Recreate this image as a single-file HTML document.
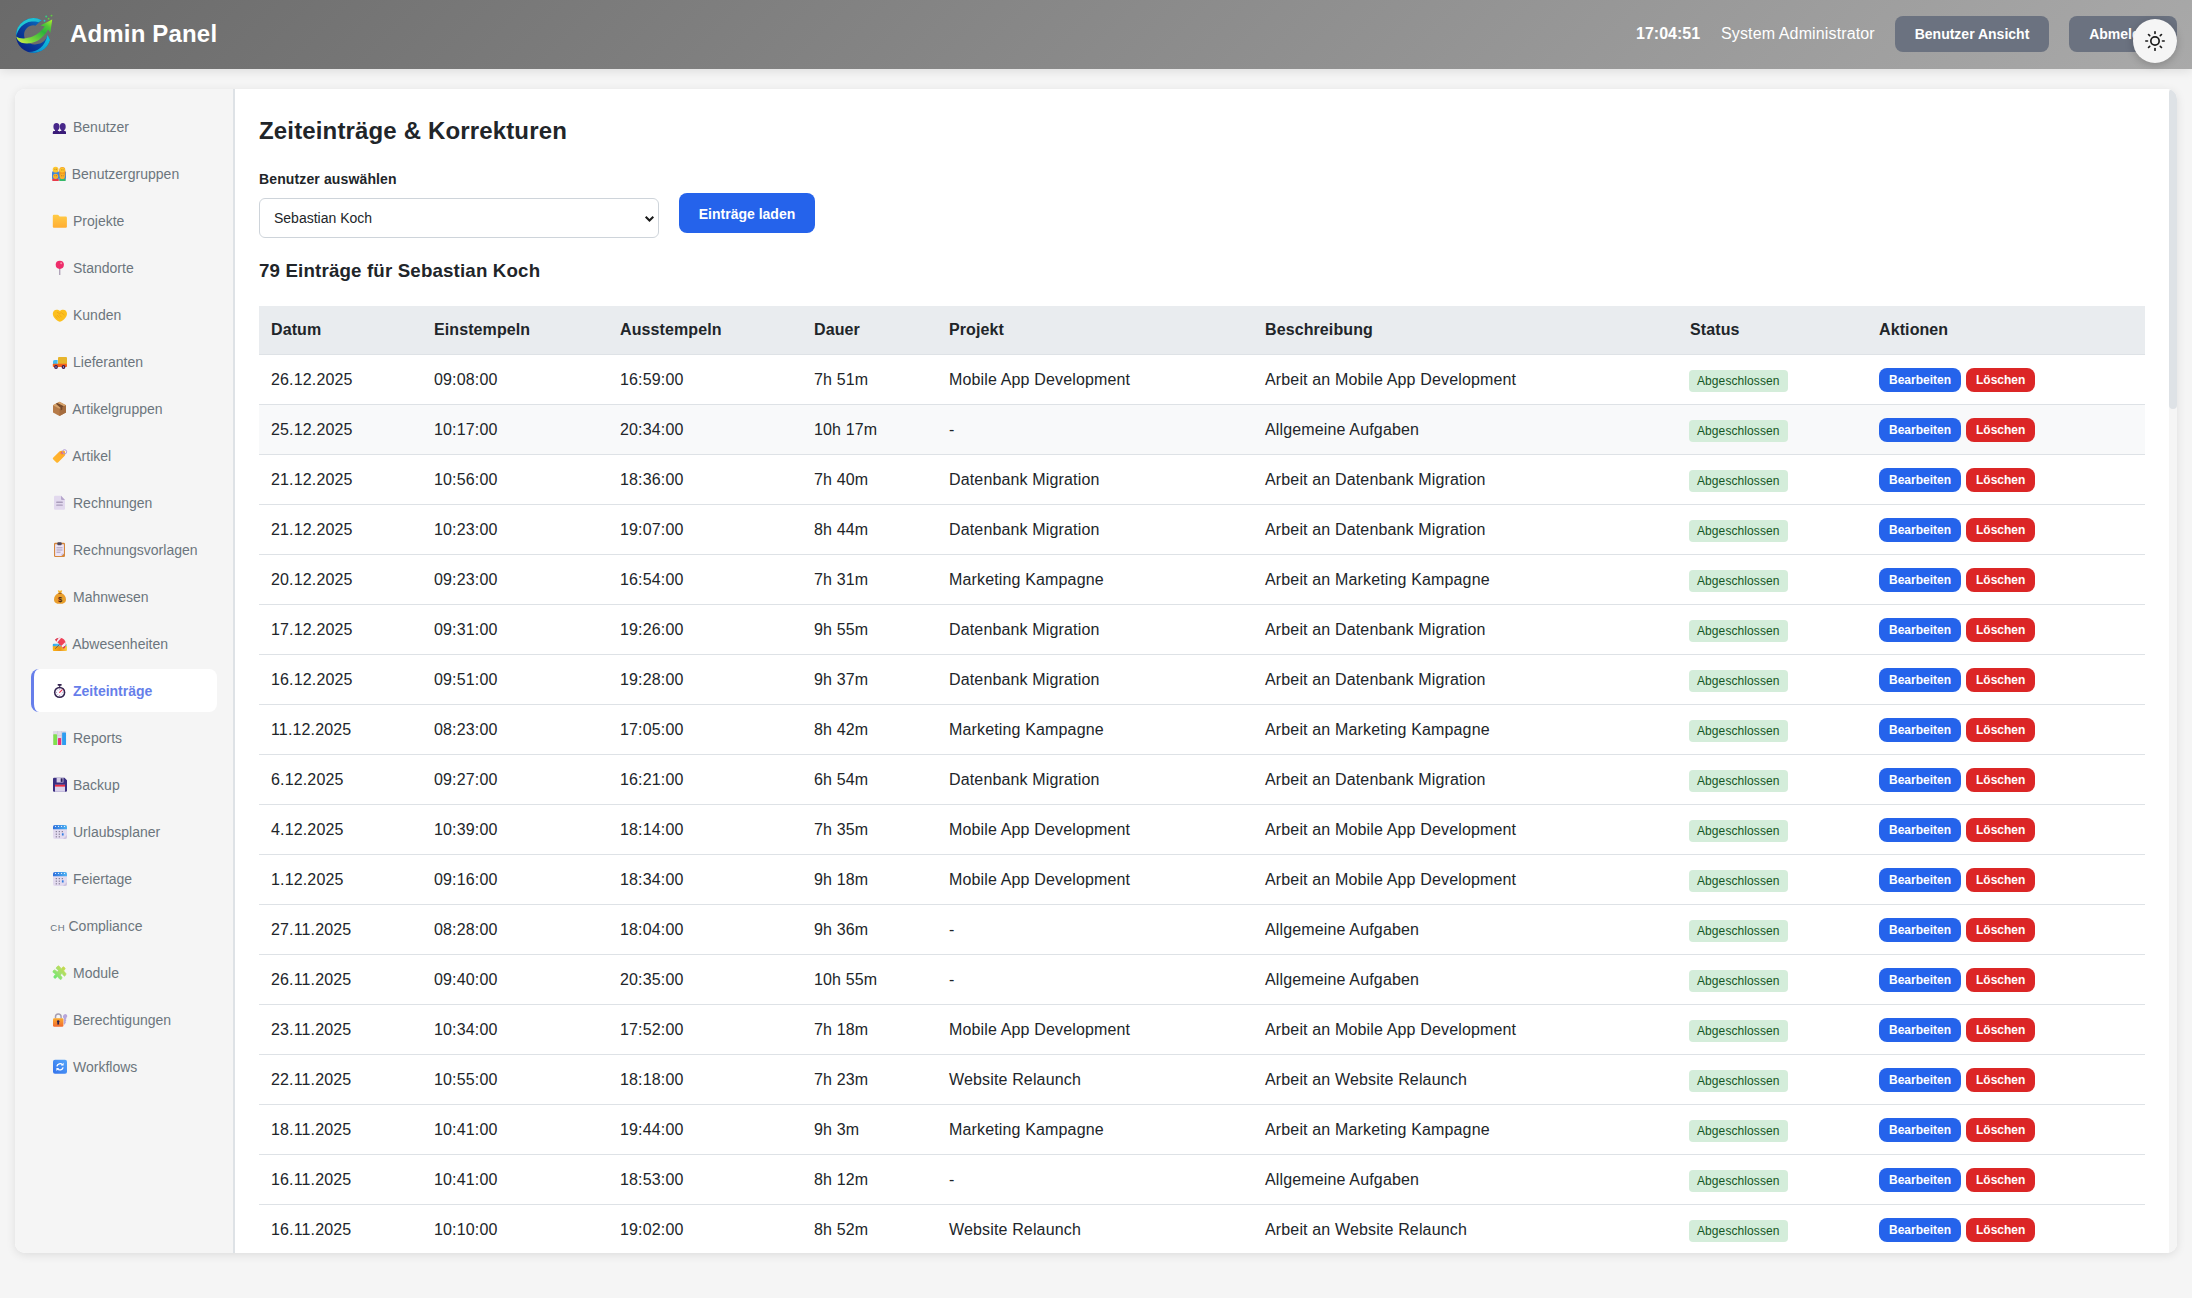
<!DOCTYPE html>
<html lang="de">
<head>
<meta charset="utf-8">
<title>Admin Panel</title>
<style>
*{box-sizing:border-box}
html,body{margin:0;padding:0}
body{width:2192px;height:1298px;overflow:hidden;background:#f5f5f5;font-family:"Liberation Sans",sans-serif;color:#212529;position:relative}
.hdr{position:absolute;left:0;top:0;width:2192px;height:69px;background:linear-gradient(135deg,#6a6a6a 0%,#a9a9a9 100%);box-shadow:0 2px 10px rgba(0,0,0,.1);z-index:2}
.logo{position:absolute;left:10px;top:8px;width:50px;height:50px}
.ttl{position:absolute;left:70px;top:20px;letter-spacing:.17px;font-size:24px;font-weight:bold;color:#fff;line-height:28px;white-space:nowrap}
.clk{position:absolute;left:1636px;top:25px;font-size:16px;font-weight:bold;color:#fff;line-height:18px;white-space:nowrap}
.usr{position:absolute;left:1721px;top:25px;letter-spacing:.13px;font-size:16px;color:#fff;line-height:18px;white-space:nowrap}
.hb{position:absolute;top:16px;height:36px;background:#6b7280;border-radius:8px;color:#fff;font-size:14px;font-weight:bold;line-height:36px;text-align:center;white-space:nowrap}
.tg{position:absolute;left:2133px;top:19px;width:44px;height:44px;border-radius:50%;background:#f5f5f5;box-shadow:0 2px 8px rgba(0,0,0,.2);z-index:3}
.tg svg{position:absolute;left:12px;top:12px;width:20px;height:20px}
.box{position:absolute;left:15px;top:89px;width:2162px;height:1164px;border-radius:10px;overflow:hidden;background:#fff;box-shadow:0 2px 10px rgba(0,0,0,.1)}
.side{position:absolute;left:0;top:0;width:220px;height:1164px;background:#f5f5f5;border-right:2px solid #dee2e6}
.ic{position:absolute;left:37px;width:16px;height:16px;display:block}
.ic svg{width:16px;height:16px;display:block}
.ch{position:absolute;left:35.300px;width:16px;height:16px;font-size:9.600px;line-height:16px;color:#6c757d;letter-spacing:.6px}
.nt{position:absolute;font-size:14px;line-height:20px;color:#6c757d;white-space:nowrap}
.nt.act{color:#667eea;font-weight:bold}
.actbg{position:absolute;left:16px;width:186px;height:43px;background:#fff;border-left:3px solid #667eea;border-radius:8px}
.main{position:absolute;left:220px;top:0;width:1934px;height:1164px;background:#fff}
.sb{position:absolute;left:2154px;top:0;width:8px;height:1164px;background:#f5f5f5}
.sb i{position:absolute;left:0;top:0;width:8px;height:320px;background:#dee2e6;border-radius:4px}
h2{position:absolute;left:24px;top:28px;margin:0;letter-spacing:.15px;font-size:24px;line-height:28px;font-weight:bold;color:#212529;white-space:nowrap}
.lbl{position:absolute;left:24px;top:82px;letter-spacing:.13px;font-size:14px;line-height:16px;font-weight:bold;white-space:nowrap}
.sel{position:absolute;left:24px;top:109px;width:400px;height:40px;border:1px solid #ced4da;border-radius:6px;background:#fff;font-size:14px;line-height:38px;padding-left:14px;color:#212529}
.sel svg{position:absolute;right:3.200px;top:13.500px;width:11px;height:11px}
.btn{position:absolute;left:444px;top:104px;width:136px;height:40px;border-radius:8px;background:#2563eb;color:#fff;font-size:14px;font-weight:bold;line-height:42px;text-align:center}
h3{position:absolute;left:24px;top:171px;margin:0;letter-spacing:.16px;font-size:18.72px;line-height:22px;font-weight:bold;white-space:nowrap}
table{position:absolute;left:24px;top:217px;width:1886px;border-collapse:collapse;table-layout:fixed;font-size:16px}
th{background:#e9ecef;text-align:left;font-weight:bold;height:48px;padding:0 12px;border-bottom:1px solid #dee2e6;line-height:18px;letter-spacing:.1px}
td{height:50px;padding:2px 12px 0;letter-spacing:.15px;border-bottom:1px solid #dee2e6;line-height:18px;white-space:nowrap;vertical-align:middle}
tr.hv td{background:#f8f9fa}
.bd{letter-spacing:.09px;display:inline-block;background:#d4edda;color:#155724;font-size:12px;line-height:22px;height:22px;padding:0 8px;border-radius:4px;position:relative;top:1px;left:-1px}
.b1,.b2{letter-spacing:0;display:inline-block;height:24px;line-height:24px;font-size:12px;font-weight:bold;color:#fff;padding:0 10px;border-radius:8px;vertical-align:middle;position:relative;top:0px}
.b1{background:#2563eb;margin-right:5px}
.b2{background:#dc2626}
</style>
</head>
<body>
<div class="hdr">
<svg class="logo" viewBox="0 0 50 50">
<defs>
<linearGradient id="lgA" x1="0" y1="0" x2="1" y2="1"><stop offset="0" stop-color="#2ad8d0"/><stop offset="1" stop-color="#0a9ad8"/></linearGradient>
<linearGradient id="lgA2" x1="0" y1="1" x2="1" y2="0"><stop offset="0" stop-color="#0b8ad0"/><stop offset="1" stop-color="#10c4dc"/></linearGradient>
<linearGradient id="lgB" x1="1" y1="0" x2="0" y2="1"><stop offset="0" stop-color="#0c8ad0"/><stop offset=".45" stop-color="#0a46a4"/><stop offset="1" stop-color="#081a7c"/></linearGradient>
<linearGradient id="lgC" x1="0" y1="1" x2="1" y2="0"><stop offset="0" stop-color="#e6f24c"/><stop offset=".28" stop-color="#7ad83c"/><stop offset=".62" stop-color="#2cb23a"/><stop offset=".8" stop-color="#52c838"/><stop offset="1" stop-color="#b8f62a"/></linearGradient>
</defs>
<path d="M31.600 12.300A17.300 17.300 0 1 0 40 32L37.600 27C36.500 31.500 33 36 25 36.400C18 36.600 14.100 32 14.100 26.800C14.100 21.500 18.500 17.300 23.600 17.300C24.300 17.300 24.900 17.500 25.400 17.700z" fill="url(#lgB)"/>
<path d="M31.600 12.300A17.300 17.300 0 0 0 6.200 29C7.500 21 13.500 14.600 21.500 13.600C24.500 13.300 27 13.500 28.600 14.300z" fill="url(#lgA)"/>
<path d="M40 32A17.300 17.300 0 0 1 18 44C26.500 44.500 34.500 39.500 37.600 27z" fill="url(#lgA2)"/>
<path d="M6.200 28.500C9 30.800 16 31.300 23.100 28.300C27.500 26.300 32 22.500 34.700 18.500L30.400 17.500L42.200 11.600L40.400 24.700L38.100 21.600C36.500 25 32 30.500 27 33.100C22 35.600 16 36 11.600 34.700C9 33.800 7 32 6.200 28.500z" fill="url(#lgC)"/>
<circle cx="36.200" cy="8.500" r="1" fill="#36cc84"/><circle cx="41.500" cy="7.600" r=".95" fill="#5ed23e"/><circle cx="38.600" cy="10.700" r=".9" fill="#5ed23e"/><circle cx="34.500" cy="12.700" r=".95" fill="#20c2ca"/>
</svg>
<div class="ttl">Admin Panel</div>
<div class="clk">17:04:51</div>
<div class="usr">System Administrator</div>
<div class="hb" style="left:1895px;width:154px">Benutzer Ansicht</div>
<div class="hb" style="left:2069px;width:108px">Abmelden</div>
</div>
<div class="tg"><svg viewBox="0 0 24 24" fill="none" stroke="#1a1a1a" stroke-width="2" stroke-linecap="round" stroke-linejoin="round"><circle cx="12" cy="12" r="5"/><line x1="12" y1="1" x2="12" y2="3"/><line x1="12" y1="21" x2="12" y2="23"/><line x1="4.220" y1="4.220" x2="5.640" y2="5.640"/><line x1="18.360" y1="18.360" x2="19.780" y2="19.780"/><line x1="1" y1="12" x2="3" y2="12"/><line x1="21" y1="12" x2="23" y2="12"/><line x1="4.220" y1="19.780" x2="5.640" y2="18.360"/><line x1="18.360" y1="5.640" x2="19.780" y2="4.220"/></svg></div>
<div class="box">
<div class="side">
<span class="ic" style="top:30px"><svg viewBox="0 0 16 16"><g fill="#47278a"><ellipse cx="4.450" cy="7.700" rx="3.050" ry="3.600"/><ellipse cx="10.750" cy="7.700" rx="2.950" ry="3.600"/><rect x="3" y="10" width="2.900" height="3"/><rect x="9.300" y="10" width="2.900" height="3"/></g><path d="M0.800 15v-1.800q0-1.100 1.200-1.100h4.600q.8 0 .9.600q.1-.6.900-.6h4.400q1.200 0 1.200 1.100V15z" fill="#3a1c78"/></svg></span>
<span class="nt" style="top:28px;left:58px">Benutzer</span>
<span class="ic" style="top:77px"><svg viewBox="0 0 16 16"><rect x="0" y="5" width="7" height="8.500" rx="1.500" fill="#3f86dd"/><rect x="7" y="5" width="7" height="8.500" rx="1.500" fill="#3f86dd"/><rect x="0.300" y="12.800" width="6.500" height="2.200" rx=".6" fill="#e83a4a"/><rect x="7.200" y="12.800" width="6.500" height="2.200" rx=".6" fill="#35b86a"/><path d="M7.300 4.200a3 3.300 0 0 1 6 0v5.500h-6z" fill="#f39a1f"/><circle cx="3.600" cy="3.700" r="2.900" fill="#fdc62e"/><circle cx="10.300" cy="4.100" r="2.500" fill="#fdc62e"/><circle cx="3.600" cy="10.300" r="2.600" fill="#f9b12a"/><circle cx="10.300" cy="10.400" r="2.600" fill="#f9b12a"/><path d="M2.400 9.700h.9M4 9.700h.9M9.100 9.800h.9M10.700 9.800h.9M2.500 3.300h.8M4 3.300h.8M9.300 3.900h.8M10.700 3.900h.8" stroke="#8a5a1a" stroke-width=".6"/></svg></span>
<span class="nt" style="top:75px;left:56.75px">Benutzergruppen</span>
<span class="ic" style="top:124px"><svg viewBox="0 0 16 16"><defs><linearGradient id="gfo" x1="0" y1="0" x2="0" y2="1"><stop offset="0" stop-color="#ffcb45"/><stop offset="1" stop-color="#ffad33"/></linearGradient></defs><path d="M0.8 2.9q0-1.1 1.1-1.1h3.6q.8 0 1.3.7l.8 1.1h6.2q1.1 0 1.1 1.1v9q0 1.1-1.1 1.1H1.9q-1.1 0-1.1-1.1z" fill="url(#gfo)"/></svg></span>
<span class="nt" style="top:122px;left:58px">Projekte</span>
<span class="ic" style="top:171px"><svg viewBox="0 0 16 16"><rect x="7.35" y="8" width="0.9" height="7" fill="#8a7898"/><circle cx="7.8" cy="4.8" r="4.1" fill="#ee2d6a"/><circle cx="9.2" cy="3.2" r="1" fill="#f98aa8"/></svg></span>
<span class="nt" style="top:169px;left:58px">Standorte</span>
<span class="ic" style="top:218px"><svg viewBox="0 0 16 16"><path d="M7.900 14.700C6 14.400 0.800 11 0.800 6.800C0.800 4.300 2.600 2.700 4.600 2.700c1.400 0 2.500.5 3.300 1.400c.8-.9 1.900-1.400 3.300-1.400c2 0 3.800 1.600 3.800 4.100c0 4.200-5.200 7.600-7.100 7.900z" fill="#fcc01e"/><path d="M5 5.200l2.300 1.300l2.200-.8l3 2.500M3.300 9l2.200 2.200M5 8l2.500 2.700M7 7.500l2.500 2.700" stroke="#eda21a" stroke-width=".8" fill="none"/></svg></span>
<span class="nt" style="top:216px;left:58px">Kunden</span>
<span class="ic" style="top:265px"><svg viewBox="0 0 16 16"><rect x="6" y="3" width="9" height="7.5" rx="1" fill="#e7b52c"/><path d="M1 10V7.600q0-1.600 1.600-1.600H5.600v4z" fill="#43bcf1"/><rect x="0.8" y="9.8" width="14.200" height="3.200" rx=".8" fill="#f3601c"/><circle cx="4" cy="13" r="1.900" fill="#36194f"/><circle cx="11.500" cy="13" r="1.900" fill="#36194f"/><circle cx="4" cy="13" r=".7" fill="#c9b8e0"/><circle cx="11.500" cy="13" r=".7" fill="#c9b8e0"/></svg></span>
<span class="nt" style="top:263px;left:58px">Lieferanten</span>
<span class="ic" style="top:312px"><svg viewBox="0 0 16 16"><path d="M7.500 0.800L14 4.200V11.600L7.500 15L1 11.600V4.200z" fill="#b67b48"/><path d="M7.500 0.800L14 4.200L7.500 7.700L1 4.200z" fill="#d6a36b"/><path d="M7.500 7.700L14 4.200V11.600L7.500 15z" fill="#a56c3e"/><path d="M3.800 2.700l6.500 3.500v2.400l-1.600.8V7z M3.800 2.700l1.600-.8l6.500 3.400l-1.600.9z" fill="#74492b"/></svg></span>
<span class="nt" style="top:310px;left:57.25px">Artikelgruppen</span>
<span class="ic" style="top:359px"><svg viewBox="0 0 16 16"><defs><linearGradient id="gtg" x1="0" y1="1" x2="1" y2="0"><stop offset="0" stop-color="#ffb92e"/><stop offset="1" stop-color="#ffa82c"/></linearGradient></defs><path d="M1.100 9.700L7.700 3.300q.7-.6 1.600-.6l2.600.1q1 .1 1.100 1.100l.2 2.700q0 .9-.7 1.500L6 14.400q-.8.700-1.600 0L1.100 11.200q-.7-.8 0-1.500z" fill="url(#gtg)"/><circle cx="10" cy="5" r="1.300" fill="#e8453c"/><circle cx="10" cy="5" r=".55" fill="#fff"/><circle cx="12.600" cy="3.800" r="2.100" fill="none" stroke="#ab94d6" stroke-width=".9"/></svg></span>
<span class="nt" style="top:357px;left:57.25px">Artikel</span>
<span class="ic" style="top:406px"><svg viewBox="0 0 16 16"><path d="M2 1.900q0-1.100 1.100-1.100H9L13 5v8.700q0 1.100-1.100 1.100H3.100q-1.100 0-1.100-1.100z" fill="#e2d9ee"/><path d="M9 0.800L13 5H10.100q-1.100 0-1.100-1.100z" fill="#b6a6cc"/><rect x="4.200" y="6.600" width="6.600" height="1.300" rx=".5" fill="#aa9dbb"/><rect x="4.200" y="9.500" width="6.600" height="1.300" rx=".5" fill="#aa9dbb"/></svg></span>
<span class="nt" style="top:404px;left:58px">Rechnungen</span>
<span class="ic" style="top:453px"><svg viewBox="0 0 16 16"><rect x="2" y="0.800" width="11" height="14.200" rx="1.200" fill="#d4873c"/><path d="M3.100 2.300H11.900V11.500L9.500 14H3.100z" fill="#ece4f7"/><path d="M9.500 14V12.200q0-.7.700-.7h1.700z" fill="#c9bddc"/><rect x="5.300" y="0.300" width="4.400" height="2.900" rx="1" fill="#4d485c"/><rect x="4.500" y="5.300" width="6" height="1" fill="#aa9fbb"/><rect x="4.500" y="7.500" width="6" height="1" fill="#aa9fbb"/><rect x="4.500" y="9.700" width="4" height="1" fill="#aa9fbb"/></svg></span>
<span class="nt" style="top:451px;left:58px">Rechnungsvorlagen</span>
<span class="ic" style="top:500px"><svg viewBox="0 0 16 16"><path d="M5.800 1.800l1-.6l1.200.7l1.200-.7l1 .6l-1.200 2.500H7z" fill="#f6b62c"/><path d="M6.300 4.200h3.400c2.600 1.200 4.300 3.600 4.300 6.200c0 3-2.200 4.400-6 4.400s-6-1.400-6-4.400c0-2.600 1.700-5 4.300-6.200z" fill="#e99e2c"/><rect x="6.300" y="3.800" width="3.400" height="1.100" rx=".5" fill="#a8601c"/><text x="8" y="12.800" font-family="Liberation Sans, sans-serif" font-weight="bold" font-size="7.500" text-anchor="middle" fill="#4a2418">$</text></svg></span>
<span class="nt" style="top:498px;left:58px">Mahnwesen</span>
<span class="ic" style="top:547px"><svg viewBox="0 0 16 16"><defs><linearGradient id="gbs" x1="0" y1="0" x2="1" y2="0"><stop offset="0" stop-color="#2fa6ee"/><stop offset=".6" stop-color="#5ccdf8"/><stop offset="1" stop-color="#92e6d6"/></linearGradient><linearGradient id="gbd" x1="0" y1="0" x2="1" y2="0"><stop offset="0" stop-color="#ffb410"/><stop offset=".5" stop-color="#e8941c"/><stop offset="1" stop-color="#ffcf48"/></linearGradient><clipPath id="cbu"><path d="M2.900 3.800A7 6.300 -45 0 1 11.800 12.700z"/></clipPath></defs><rect x="0.800" y="7.800" width="14.200" height="3.400" rx="1" fill="url(#gbs)"/><path d="M0.800 10.200h14.200v3.700q0 1-1 1H1.800q-1 0-1-1z" fill="url(#gbd)"/><path d="M3.200 12.700L7.600 8.400" stroke="#6a4a4a" stroke-width=".8"/><path d="M2.900 3.800A7 6.300 -45 0 1 11.800 12.700z" fill="#ef4259"/><g clip-path="url(#cbu)" fill="#f4eef8"><polygon points="3.900,4.800 5.400,6.300 9.600,1.500 6.400,1"/><polygon points="9.200,10.100 10.500,11.400 15,8.200 14.600,5"/></g><path d="M2.900 3.800L4.400 5.300L7 1.500L5 1.500z M10.800 11.700L11.800 12.700L15 10L14.800 8.500z" fill="#d93a50" clip-path="url(#cbu)"/></svg></span>
<span class="nt" style="top:545px;left:57.25px">Abwesenheiten</span>
<div class="actbg" style="top:580px"></div>
<span class="ic" style="top:594px"><svg viewBox="0 0 16 16"><rect x="5.600" y="0.900" width="4.100" height="1.800" rx=".6" fill="#33244f"/><rect x="7" y="2.200" width="1.300" height="1.600" fill="#33244f"/><circle cx="7.650" cy="9.400" r="5.700" fill="#33244f"/><circle cx="7.650" cy="9.400" r="4.200" fill="#fbf8ff"/><path d="M7.650 9.400L10.100 6.900" stroke="#e8304f" stroke-width="1.100" stroke-linecap="round"/><g stroke="#6a5a86" stroke-width=".7"><path d="M7.650 5.600v1M7.650 12.200v1M3.850 9.400h1M10.450 9.400h1M5 6.700l.6.600M10.300 12.100l-.6-.6M5 12.100l.6-.6"/></g></svg></span>
<span class="nt act" style="top:592px;left:58px">Zeiteinträge</span>
<span class="ic" style="top:641px"><svg viewBox="0 0 16 16"><rect x="1" y="1" width="13.200" height="14" rx=".8" fill="#dfdae7"/><path d="M1 5.500h13.200M1 10h13.200M5.500 1v14M9.500 1v14" stroke="#c9c2d6" stroke-width=".5"/><rect x="1.300" y="4.200" width="3.700" height="10.800" rx=".6" fill="#7fe04d"/><rect x="6" y="8" width="3.100" height="7" rx=".6" fill="#e92f78"/><rect x="10.100" y="2.500" width="3.900" height="12.500" rx=".6" fill="#2e9df0"/></svg></span>
<span class="nt" style="top:639px;left:58px">Reports</span>
<span class="ic" style="top:688px"><svg viewBox="0 0 16 16"><path d="M1 1.900q0-1.100 1.100-1.100H12.500L15 3.300V13.700q0 1.100-1.100 1.100H2.100q-1.100 0-1.100-1.100z" fill="#3a2e80"/><rect x="4.600" y="0.800" width="6.800" height="4.700" fill="#d6cee7"/><rect x="8.700" y="1.300" width="1.900" height="3.600" fill="#2a1f5c"/><rect x="3" y="7.800" width="10" height="7" fill="#dad2eb"/><rect x="3" y="7.800" width="10" height="1.800" fill="#ef2e40"/></svg></span>
<span class="nt" style="top:686px;left:58px">Backup</span>
<span class="ic" style="top:735px"><svg viewBox="0 0 16 16"><defs><linearGradient id="gcl" x1="0" y1="0" x2="1" y2="0"><stop offset="0" stop-color="#2d6fdc"/><stop offset="1" stop-color="#4db3f3"/></linearGradient></defs><rect x="1" y="1" width="14" height="14" rx="2" fill="#e3dbef"/><path d="M1 3q0-2 2-2H13q2 0 2 2V5.300H1z" fill="url(#gcl)"/><g fill="#fff" opacity=".85"><circle cx="3.500" cy="2.400" r=".6"/><circle cx="6.500" cy="2.400" r=".6"/><circle cx="9.500" cy="2.400" r=".6"/><circle cx="12.500" cy="2.400" r=".6"/></g><g fill="#8a8399"><rect x="3.700" y="7" width="1.300" height="1.200"/><rect x="6.700" y="7" width="1.300" height="1.200"/><rect x="9.700" y="7" width="1.300" height="1.200"/><rect x="3.700" y="9.600" width="1.300" height="1.200"/><rect x="6.700" y="9.600" width="1.300" height="1.200"/><rect x="3.700" y="12.200" width="1.300" height="1.200"/><rect x="6.700" y="12.200" width="1.300" height="1.200"/></g><rect x="9.900" y="9.300" width="1.700" height="2.200" fill="#2f7de2"/><path d="M11 15L15 11V13q0 2-2 2z" fill="#cfc5df"/></svg></span>
<span class="nt" style="top:733px;left:58px">Urlaubsplaner</span>
<span class="ic" style="top:782px"><svg viewBox="0 0 16 16"><defs><linearGradient id="gcl2" x1="0" y1="0" x2="1" y2="0"><stop offset="0" stop-color="#2d6fdc"/><stop offset="1" stop-color="#4db3f3"/></linearGradient></defs><rect x="1" y="1" width="14" height="14" rx="2" fill="#e3dbef"/><path d="M1 3q0-2 2-2H13q2 0 2 2V5.300H1z" fill="url(#gcl2)"/><g fill="#fff" opacity=".85"><circle cx="3.500" cy="2.400" r=".6"/><circle cx="6.500" cy="2.400" r=".6"/><circle cx="9.500" cy="2.400" r=".6"/><circle cx="12.500" cy="2.400" r=".6"/></g><g fill="#8a8399"><rect x="3.700" y="7" width="1.300" height="1.200"/><rect x="6.700" y="7" width="1.300" height="1.200"/><rect x="9.700" y="7" width="1.300" height="1.200"/><rect x="3.700" y="9.600" width="1.300" height="1.200"/><rect x="6.700" y="9.600" width="1.300" height="1.200"/><rect x="3.700" y="12.200" width="1.300" height="1.200"/><rect x="6.700" y="12.200" width="1.300" height="1.200"/></g><rect x="9.900" y="9.300" width="1.700" height="2.200" fill="#2f7de2"/><path d="M11 15L15 11V13q0 2-2 2z" fill="#cfc5df"/></svg></span>
<span class="nt" style="top:780px;left:58px">Feiertage</span>
<span class="ch" style="top:831px">CH</span>
<span class="nt" style="top:827px;left:53.5px">Compliance</span>
<span class="ic" style="top:876px"><svg viewBox="0 0 16 16"><defs><linearGradient id="gpz" x1="0" y1="1" x2="1" y2="0"><stop offset="0" stop-color="#5ee870"/><stop offset=".5" stop-color="#a2e070"/><stop offset="1" stop-color="#d2d83e"/></linearGradient></defs><polygon points="4.69,2.10 6.36,0.81 8.02,2.10 9.31,4.14 10.24,2.47 11.72,1.73 13.20,3.40 12.27,5.25 11.35,5.62 12.64,7.09 13.94,8.57 13.75,10.05 12.46,11.16 11.16,10.05 10.05,8.20 8.94,8.94 8.57,10.42 10.05,12.27 9.50,14.12 8.20,14.49 6.72,13.01 5.62,11.53 4.51,12.27 3.40,13.38 1.92,12.64 1.92,11.16 3.40,9.68 2.66,8.20 1.18,7.46 0.99,5.99 2.29,4.88 3.95,5.62 5.25,6.91 6.36,5.62 5.25,4.14 4.14,3.40" fill="url(#gpz)" stroke="url(#gpz)" stroke-width=".7" stroke-linejoin="round"/></svg></span>
<span class="nt" style="top:874px;left:58px">Module</span>
<span class="ic" style="top:923px"><svg viewBox="0 0 16 16"><defs><linearGradient id="glk" x1="0" y1="0" x2="0" y2="1"><stop offset="0" stop-color="#fbab2e"/><stop offset="1" stop-color="#f0692f"/></linearGradient></defs><path d="M11.300 3.600a2 2 0 1 1 2.800 2.300l.3 1.200l-.8.700l.8.800l-.9.800l.4 1.100l-1.500 2.300l-.7-.6V6.200a2 2 0 0 1-.4-2.600z" fill="#b7a6da"/><path d="M3.500 6.500V4.800a2.800 2.800 0 0 1 5.600 0V6.500" fill="none" stroke="#a69eb2" stroke-width="1.500"/><rect x="1" y="6.200" width="10.400" height="8.600" rx="1.300" fill="url(#glk)"/><circle cx="6.200" cy="9.600" r="1.250" fill="#2a1f4f"/><path d="M5.600 10l-.4 2.600h2l-.4-2.600z" fill="#2a1f4f"/></svg></span>
<span class="nt" style="top:921px;left:58px">Berechtigungen</span>
<span class="ic" style="top:970px"><svg viewBox="0 0 16 16"><defs><linearGradient id="gwf" x1="0" y1="1" x2="1" y2="0"><stop offset="0" stop-color="#3372ec"/><stop offset="1" stop-color="#55a6fa"/></linearGradient></defs><rect x="1" y="0.800" width="14" height="14" rx="2" fill="url(#gwf)"/><g fill="none" stroke="#fff" stroke-width="1.300"><path d="M4.900 7.300a3.200 3.200 0 0 1 5.600-1.500"/><path d="M11.100 8.300a3.200 3.200 0 0 1-5.600 1.500"/></g><path d="M11.600 3.700V6.500H8.800z M4.400 11.900V9.100H7.200z" fill="#fff"/></svg></span>
<span class="nt" style="top:968px;left:58px">Workflows</span>
</div>
<div class="main">
<h2>Zeiteinträge &amp; Korrekturen</h2>
<div class="lbl">Benutzer auswählen</div>
<div class="sel">Sebastian Koch<svg viewBox="0 0 11 11"><path d="M1.700 3.700L5.500 7.500L9.300 3.700" fill="none" stroke="#1a1a1a" stroke-width="2"/></svg></div>
<div class="btn">Einträge laden</div>
<h3>79 Einträge für Sebastian Koch</h3>
<table>
<colgroup><col style="width:163px"><col style="width:186px"><col style="width:194px"><col style="width:135px"><col style="width:316px"><col style="width:425px"><col style="width:189px"><col style="width:278px"></colgroup>
<thead><tr><th>Datum</th><th>Einstempeln</th><th>Ausstempeln</th><th>Dauer</th><th>Projekt</th><th>Beschreibung</th><th>Status</th><th>Aktionen</th></tr></thead>
<tbody>
<tr><td>26.12.2025</td><td>09:08:00</td><td>16:59:00</td><td>7h 51m</td><td>Mobile App Development</td><td>Arbeit an Mobile App Development</td><td><span class="bd">Abgeschlossen</span></td><td><span class="b1">Bearbeiten</span><span class="b2">Löschen</span></td></tr>
<tr class="hv"><td>25.12.2025</td><td>10:17:00</td><td>20:34:00</td><td>10h 17m</td><td>-</td><td>Allgemeine Aufgaben</td><td><span class="bd">Abgeschlossen</span></td><td><span class="b1">Bearbeiten</span><span class="b2">Löschen</span></td></tr>
<tr><td>21.12.2025</td><td>10:56:00</td><td>18:36:00</td><td>7h 40m</td><td>Datenbank Migration</td><td>Arbeit an Datenbank Migration</td><td><span class="bd">Abgeschlossen</span></td><td><span class="b1">Bearbeiten</span><span class="b2">Löschen</span></td></tr>
<tr><td>21.12.2025</td><td>10:23:00</td><td>19:07:00</td><td>8h 44m</td><td>Datenbank Migration</td><td>Arbeit an Datenbank Migration</td><td><span class="bd">Abgeschlossen</span></td><td><span class="b1">Bearbeiten</span><span class="b2">Löschen</span></td></tr>
<tr><td>20.12.2025</td><td>09:23:00</td><td>16:54:00</td><td>7h 31m</td><td>Marketing Kampagne</td><td>Arbeit an Marketing Kampagne</td><td><span class="bd">Abgeschlossen</span></td><td><span class="b1">Bearbeiten</span><span class="b2">Löschen</span></td></tr>
<tr><td>17.12.2025</td><td>09:31:00</td><td>19:26:00</td><td>9h 55m</td><td>Datenbank Migration</td><td>Arbeit an Datenbank Migration</td><td><span class="bd">Abgeschlossen</span></td><td><span class="b1">Bearbeiten</span><span class="b2">Löschen</span></td></tr>
<tr><td>16.12.2025</td><td>09:51:00</td><td>19:28:00</td><td>9h 37m</td><td>Datenbank Migration</td><td>Arbeit an Datenbank Migration</td><td><span class="bd">Abgeschlossen</span></td><td><span class="b1">Bearbeiten</span><span class="b2">Löschen</span></td></tr>
<tr><td>11.12.2025</td><td>08:23:00</td><td>17:05:00</td><td>8h 42m</td><td>Marketing Kampagne</td><td>Arbeit an Marketing Kampagne</td><td><span class="bd">Abgeschlossen</span></td><td><span class="b1">Bearbeiten</span><span class="b2">Löschen</span></td></tr>
<tr><td>6.12.2025</td><td>09:27:00</td><td>16:21:00</td><td>6h 54m</td><td>Datenbank Migration</td><td>Arbeit an Datenbank Migration</td><td><span class="bd">Abgeschlossen</span></td><td><span class="b1">Bearbeiten</span><span class="b2">Löschen</span></td></tr>
<tr><td>4.12.2025</td><td>10:39:00</td><td>18:14:00</td><td>7h 35m</td><td>Mobile App Development</td><td>Arbeit an Mobile App Development</td><td><span class="bd">Abgeschlossen</span></td><td><span class="b1">Bearbeiten</span><span class="b2">Löschen</span></td></tr>
<tr><td>1.12.2025</td><td>09:16:00</td><td>18:34:00</td><td>9h 18m</td><td>Mobile App Development</td><td>Arbeit an Mobile App Development</td><td><span class="bd">Abgeschlossen</span></td><td><span class="b1">Bearbeiten</span><span class="b2">Löschen</span></td></tr>
<tr><td>27.11.2025</td><td>08:28:00</td><td>18:04:00</td><td>9h 36m</td><td>-</td><td>Allgemeine Aufgaben</td><td><span class="bd">Abgeschlossen</span></td><td><span class="b1">Bearbeiten</span><span class="b2">Löschen</span></td></tr>
<tr><td>26.11.2025</td><td>09:40:00</td><td>20:35:00</td><td>10h 55m</td><td>-</td><td>Allgemeine Aufgaben</td><td><span class="bd">Abgeschlossen</span></td><td><span class="b1">Bearbeiten</span><span class="b2">Löschen</span></td></tr>
<tr><td>23.11.2025</td><td>10:34:00</td><td>17:52:00</td><td>7h 18m</td><td>Mobile App Development</td><td>Arbeit an Mobile App Development</td><td><span class="bd">Abgeschlossen</span></td><td><span class="b1">Bearbeiten</span><span class="b2">Löschen</span></td></tr>
<tr><td>22.11.2025</td><td>10:55:00</td><td>18:18:00</td><td>7h 23m</td><td>Website Relaunch</td><td>Arbeit an Website Relaunch</td><td><span class="bd">Abgeschlossen</span></td><td><span class="b1">Bearbeiten</span><span class="b2">Löschen</span></td></tr>
<tr><td>18.11.2025</td><td>10:41:00</td><td>19:44:00</td><td>9h 3m</td><td>Marketing Kampagne</td><td>Arbeit an Marketing Kampagne</td><td><span class="bd">Abgeschlossen</span></td><td><span class="b1">Bearbeiten</span><span class="b2">Löschen</span></td></tr>
<tr><td>16.11.2025</td><td>10:41:00</td><td>18:53:00</td><td>8h 12m</td><td>-</td><td>Allgemeine Aufgaben</td><td><span class="bd">Abgeschlossen</span></td><td><span class="b1">Bearbeiten</span><span class="b2">Löschen</span></td></tr>
<tr><td>16.11.2025</td><td>10:10:00</td><td>19:02:00</td><td>8h 52m</td><td>Website Relaunch</td><td>Arbeit an Website Relaunch</td><td><span class="bd">Abgeschlossen</span></td><td><span class="b1">Bearbeiten</span><span class="b2">Löschen</span></td></tr>
</tbody>
</table>
</div>
<div class="sb"><i></i></div>
</div>
</body>
</html>
